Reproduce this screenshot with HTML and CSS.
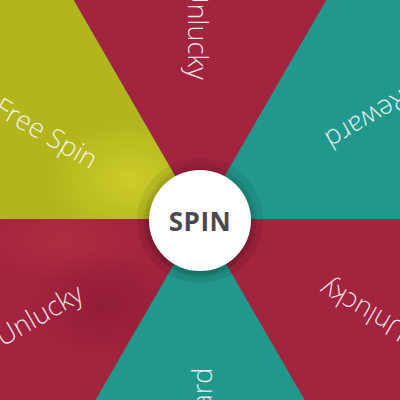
FILE: index.html
```html
<!DOCTYPE html>
<html lang="en">
<head>
<meta charset="utf-8">
<title>Spin Wheel</title>
<link rel="stylesheet" href="styles.css">
</head>
<body>
<div class="stage">
  <svg class="wheel" width="400" height="400" viewBox="0 0 400 400" xmlns="http://www.w3.org/2000/svg">
    <defs>
      <radialGradient id="glowY" cx="0.5" cy="0.5" r="0.5">
        <stop offset="0" stop-color="#e6e43a" stop-opacity="0.5"/>
        <stop offset="1" stop-color="#e6e43a" stop-opacity="0"/>
      </radialGradient>
      <radialGradient id="darkR" cx="0.5" cy="0.5" r="0.5">
        <stop offset="0" stop-color="#6a0a24" stop-opacity="0.3"/>
        <stop offset="1" stop-color="#6a0a24" stop-opacity="0"/>
      </radialGradient>
      <radialGradient id="lightR" cx="0.5" cy="0.5" r="0.5">
        <stop offset="0" stop-color="#c8453f" stop-opacity="0.3"/>
        <stop offset="1" stop-color="#c8453f" stop-opacity="0"/>
      </radialGradient>
      <clipPath id="clipY"><polygon points="200,219 -300,219 -50,-214"/></clipPath>
      <clipPath id="clipLL"><polygon points="200,219 -50,652 -300,219"/></clipPath>
    </defs>
    <polygon class="seg red" points="200,219 -50,-214 450,-214"/>
    <polygon class="seg teal" points="200,219 450,-214 700,219"/>
    <polygon class="seg red" points="200,219 700,219 450,652"/>
    <polygon class="seg teal" points="200,219 450,652 -50,652"/>
    <polygon class="seg red" points="200,219 -50,652 -300,219"/>
    <polygon class="seg yellow" points="200,219 -300,219 -50,-214"/>
    <g clip-path="url(#clipY)">
      <ellipse cx="130" cy="180" rx="85" ry="60" fill="url(#glowY)"/>
    </g>
    <g clip-path="url(#clipLL)">
      <ellipse cx="60" cy="240" rx="90" ry="40" fill="url(#lightR)"/>
      <ellipse cx="105" cy="305" rx="80" ry="55" fill="url(#darkR)"/>
    </g>
    <text class="label" x="-235" y="12" transform="translate(200 219) rotate(90)">Unlucky</text>
    <text class="label" x="-240" y="12" transform="translate(200 219) rotate(150)">Reward</text>
    <text class="label" x="-235" y="12" transform="translate(200 219) rotate(210)">Unlucky</text>
    <text class="label" x="-240" y="12" transform="translate(200 219) rotate(270)">Reward</text>
    <text class="label" x="-235" y="12" transform="translate(200 219) rotate(330)">Unlucky</text>
    <text class="label" x="-233" y="12" transform="translate(200 219) rotate(30)">Free Spin</text>
  </svg>
  <button class="spin" type="button">SPIN</button>
</div>
</body>
</html>
```
FILE: styles.css
```css
html, body {
  margin: 0;
  padding: 0;
  background: #22988c;
}

.stage {
  width: 400px;
  height: 400px;
  overflow: hidden;
  display: grid;
}

.wheel {
  grid-area: 1 / 1;
  display: block;
}

.seg.red { fill: #a3243f; }
.seg.teal { fill: #22988c; }
.seg.yellow { fill: #b2b51b; }

.label {
  font-family: "Open Sans", "Liberation Sans", sans-serif;
  font-weight: 300;
  font-size: 27px;
  fill: rgba(255, 255, 255, 0.88);
}

.spin {
  grid-area: 1 / 1;
  justify-self: center;
  align-self: start;
  margin-top: 170px;
  width: 102px;
  height: 101px;
  border-radius: 50%;
  border: none;
  padding: 0;
  background: #ffffff;
  color: #4a4953;
  font-family: "Open Sans", "Liberation Sans", sans-serif;
  font-weight: 700;
  font-size: 26px;
  letter-spacing: 0.5px;
  box-shadow:
    0 0 0 5px rgba(0, 0, 0, 0.05),
    0 0 0 12px rgba(0, 0, 0, 0.07),
    0 3px 8px rgba(0, 0, 0, 0.25);
}
```
